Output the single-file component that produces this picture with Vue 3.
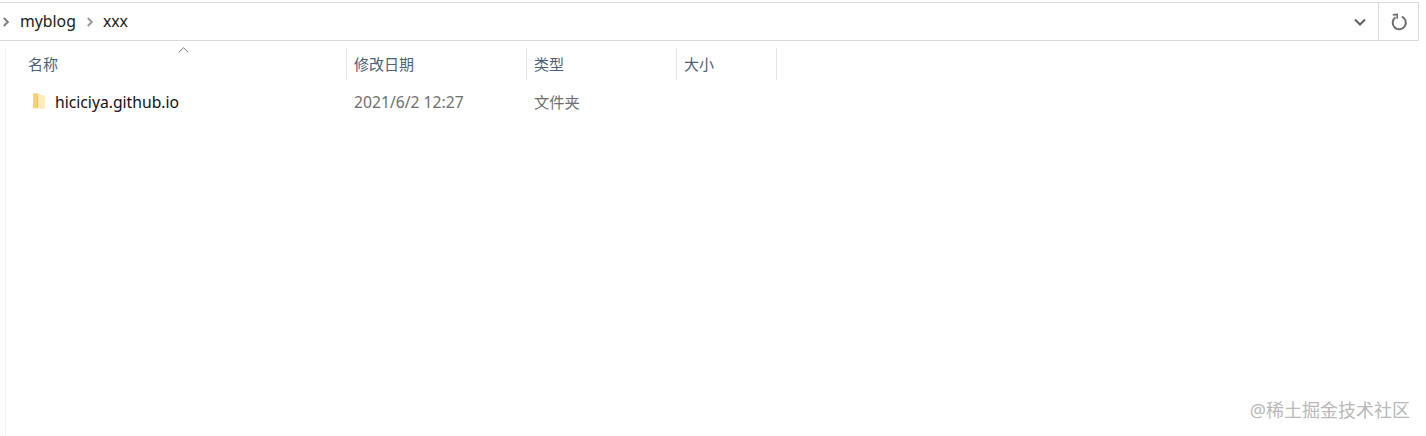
<template>
  <div class="window">
    <div class="address">
      <div class="crumbs">
        <svg class="sep first" width="8" height="12" viewBox="0 0 8 12"><path d="M1.800 2l4 4-4 4" fill="none" stroke="#808080" stroke-width="2"/></svg>
        <span class="crumb">myblog</span>
        <svg class="sep" width="8" height="12" viewBox="0 0 8 12"><path d="M1.800 2l4 4-4 4" fill="none" stroke="#9a9a9a" stroke-width="2"/></svg>
        <span class="crumb">xxx</span>
      </div>
      <svg class="drop" width="14" height="10" viewBox="0 0 14 10"><path d="M2 2.500l5 5 5-5" fill="none" stroke="#5f5f5f" stroke-width="2"/></svg>
      <div class="refresh">
        <svg width="18" height="18" viewBox="0 0 18 18"><path d="M5.500 4.300A6.600 6.600 0 1 0 11.800 3.600" fill="none" stroke="#6e6e6e" stroke-width="2"/><path d="M2.800 1.900L7.200 1.500L7.200 5.800" fill="none" stroke="#6e6e6e" stroke-width="1.600"/></svg>
      </div>
    </div>
    <div class="pane">
      <div class="head">
        <div class="col name">名称
          <svg class="sort" width="11" height="6" viewBox="0 0 11 6"><path d="M0.800 5.200L5.500 0.800l4.700 4.400" fill="none" stroke="#777" stroke-width="1"/></svg>
        </div>
        <div class="col date">修改日期</div>
        <div class="col type">类型</div>
        <div class="col size">大小</div>
      </div>
      <div class="row">
        <div class="cell name-cell">
          <svg class="folder" width="14" height="16" viewBox="0 0 14 16">
            <path d="M1 0.500h6l1 2h5v13H1z" fill="#fae2a0"/>
            <path d="M1 0.500h4.500v14.500H1z" fill="#f6d36e"/>
            <path d="M5.500 2.800L13 2.500v12.500H5.500z" fill="#fcecbc"/>
            <path d="M5.500 2.800v12.200" stroke="#eec259" stroke-width="1"/>
          </svg>
          <span>hiciciya.github.io</span>
        </div>
        <div class="cell muted date-cell">2021/6/2 12:27</div>
        <div class="cell muted type-cell">文件夹</div>
      </div>
    </div>
    <div class="mark">@稀土掘金技术社区</div>
  </div>
</template>

<script setup>
</script>

<style>
html, body { margin: 0; background: #fff; }
</style>

<style scoped>
.window {
  position: relative;
  width: 1426px;
  height: 436px;
  overflow: hidden;
  background: #fff;
  padding-top: 2px;
  box-sizing: border-box;
  font-family: "Noto Sans", "Noto Sans CJK SC", sans-serif;
}
.address {
  display: flex;
  align-items: center;
  width: 1419px;
  height: 39px;
  box-sizing: border-box;
  border: 1px solid #d9d9d9;
  border-left: none;
}
.crumbs {
  flex: 1;
  display: flex;
  align-items: center;
  font-size: 15.800px;
  color: #1a1a1a;
}
.crumb { position: relative; top: -1px; }
.sep { margin-left: 10px; margin-right: 9px; }
.sep.first { margin-left: 2px; margin-right: 10px; }
.drop { margin-right: 11px; }
.refresh {
  width: 39px;
  height: 100%;
  border-left: 1px solid #d9d9d9;
  display: flex;
  align-items: center;
  justify-content: center;
}
.pane {
  height: 395px;
  margin-left: 5px;
  border-left: 1px solid #f2f2f2;
}
.head {
  display: grid;
  grid-template-columns: 341px 180px 150px 100px;
  margin-top: 7px;
  height: 32px;
  font-size: 15px;
  color: #4c607a;
}
.col {
  position: relative;
  display: flex;
  align-items: center;
  padding-left: 7px;
  padding-bottom: 2px;
  box-sizing: border-box;
  border-right: 1px solid #e5e5e5;
}
.col.name { padding-left: 22px; }
.sort { position: absolute; left: 172px; top: -1px; }
.row {
  display: grid;
  grid-template-columns: 341px 180px 150px;
  height: 30px;
  margin-top: 7px;
  font-size: 15.700px;
  align-items: center;
}
.cell { display: flex; align-items: center; padding-left: 7px; }
.name-cell { padding-left: 26px; color: #111; gap: 9px; }
.folder { margin-top: -3px; }
.muted { color: #6e6e6e; font-size: 15.700px; }
.type-cell { font-size: 15.300px; position: relative; top: -1px; }
.mark {
  position: absolute;
  right: 16px;
  bottom: 14px;
  font-size: 18px;
  line-height: 24px;
  color: #b8b8b8;
}
</style>
